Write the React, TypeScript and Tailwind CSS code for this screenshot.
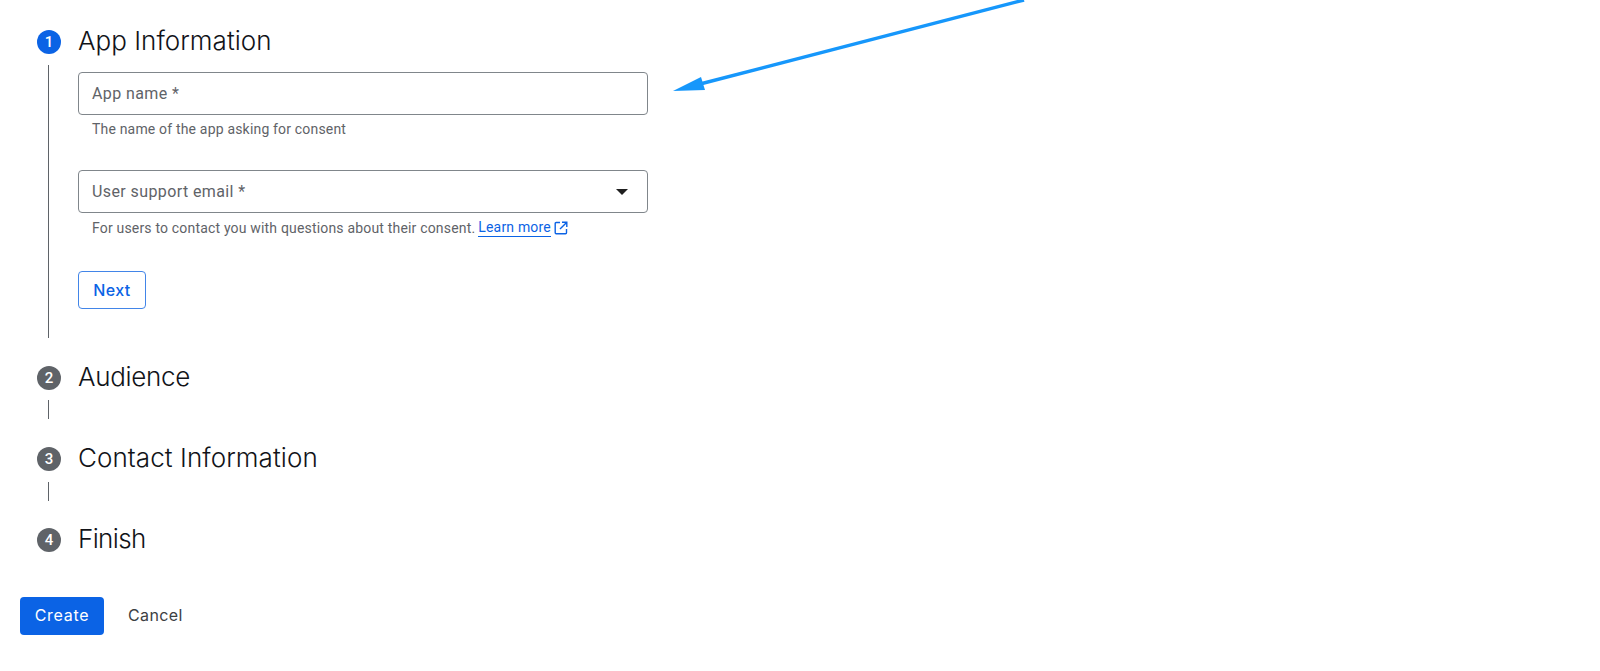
import React from "react";

const roboto = "[font-family:Roboto,sans-serif]";

function Circle({ n, active }: { n: number; active?: boolean }) {
  return (
    <div
      className={`flex h-[24px] w-[24px] shrink-0 items-center justify-center rounded-full text-[15px] font-medium text-white ${roboto} ${
        active ? "bg-[#0b63e5]" : "bg-[#5f6368]"
      }`}
    >
      {n}
    </div>
  );
}

function StepHeader({
  n,
  title,
  active,
  tracking,
}: {
  n: number;
  title: string;
  active?: boolean;
  tracking: string;
}) {
  return (
    <div className="flex h-[28px] items-center gap-[17px]">
      <Circle n={n} active={active} />
      <h2 className={`pb-[2px] text-[26px] leading-[28px] font-[350] text-[#111318] [font-family:Inter,sans-serif] ${tracking}`}>
        {title}
      </h2>
    </div>
  );
}

function Rail({ children, h, top }: { children?: React.ReactNode; h: string; top: string }) {
  return (
    <div className={`flex gap-[17px] ${top} ${h}`}>
      <div className="flex w-[24px] shrink-0 justify-center pr-[1px]">
        <div className="h-full w-[1px] bg-[#5f6368]" />
      </div>
      {children}
    </div>
  );
}

function Field({ label, select }: { label: string; select?: boolean }) {
  return (
    <div className="flex h-[43px] w-[570px] items-center justify-between rounded-[4px] border border-[#80868b] pr-[19px] pl-[13px]">
      <span className={`text-[16px] tracking-[0.4px] text-[#5f6368] ${roboto}`}>{label}</span>
      {select && (
        <svg width="12" height="6" viewBox="0 0 12 6" aria-hidden="true">
          <path d="M0 0h12L6 6z" fill="#1f1f1f" />
        </svg>
      )}
    </div>
  );
}

export default function App() {
  return (
    <div className="relative h-[671px] w-full overflow-hidden bg-white pt-[28px] pl-[20px]">
      <svg
        className="absolute top-0 left-0"
        width="1100"
        height="110"
        viewBox="0 0 1100 110"
        aria-hidden="true"
      >
        <path d="M1024 0 L702 83.5" stroke="#1697fb" strokeWidth="3.4" fill="none" />
        <path d="M673 91 L701 77 L705 90 Z" fill="#1697fb" />
      </svg>

      <div className="ml-[17px]">
        <StepHeader n={1} title="App Information" active tracking="tracking-[0.03px]" />
        <Rail h="h-[273px]" top="mt-[9px]">
          <div className="pt-[7px]">
            <Field label="App name *" />
            <p className={`mt-[5px] pl-[14px] text-[14px] leading-[18px] tracking-[0.18px] text-[#5f6368] ${roboto}`}>
              The name of the app asking for consent
            </p>
            <div className="mt-[32px]">
              <Field label="User support email *" select />
            </div>
            <p className={`mt-[5px] flex items-center pl-[14px] text-[14px] leading-[18px] tracking-[0.18px] text-[#5f6368] ${roboto}`}>
              For users to contact you with questions about their consent.
              <a className="ml-[3px] border-b border-[#0b63e5] text-[#0b63e5]">Learn more</a>
              <svg
                className="ml-[3px]"
                width="14"
                height="14"
                viewBox="0 0 14 14"
                fill="none"
                stroke="#0b63e5"
                strokeWidth="1.4"
                aria-hidden="true"
              >
                <path d="M6 1.5H2.2a1 1 0 0 0-1 1v9.3a1 1 0 0 0 1 1h9.3a1 1 0 0 0 1-1V8" />
                <path d="M8 1.2h4.8V6M12.6 1.4 6 8" />
              </svg>
            </p>
            <button className="mt-[34px] flex h-[38px] w-[68px] items-center justify-center rounded-[4px] border border-[#4285e8] pb-[1px] text-[16px] font-medium tracking-[0.4px] text-[#0b63e5] [font-family:Inter,sans-serif]">
              Next
            </button>
          </div>
        </Rail>
        <div className="mt-[26px]">
          <StepHeader n={2} title="Audience" tracking="tracking-[-0.3px]" />
          <Rail h="h-[19px]" top="mt-[8px]" />
        </div>
        <div className="mt-[26px]">
          <StepHeader n={3} title="Contact Information" tracking="tracking-[0.07px]" />
          <Rail h="h-[19px]" top="mt-[9px]" />
        </div>
        <div className="mt-[25px]">
          <StepHeader n={4} title="Finish" tracking="tracking-[-0.65px]" />
        </div>
      </div>

      <div className="mt-[43px] flex items-center gap-[24px]">
        <button className="flex h-[38px] w-[84px] items-center justify-center rounded-[4px] bg-[#0b63e5] pb-[2px] text-[16px] tracking-[0.7px] text-white [font-family:Inter,sans-serif]">
          Create
        </button>
        <button className="pb-[2px] text-[16px] tracking-[0.4px] text-[#3c4043] [font-family:Inter,sans-serif]">
          Cancel
        </button>
      </div>
    </div>
  );
}
